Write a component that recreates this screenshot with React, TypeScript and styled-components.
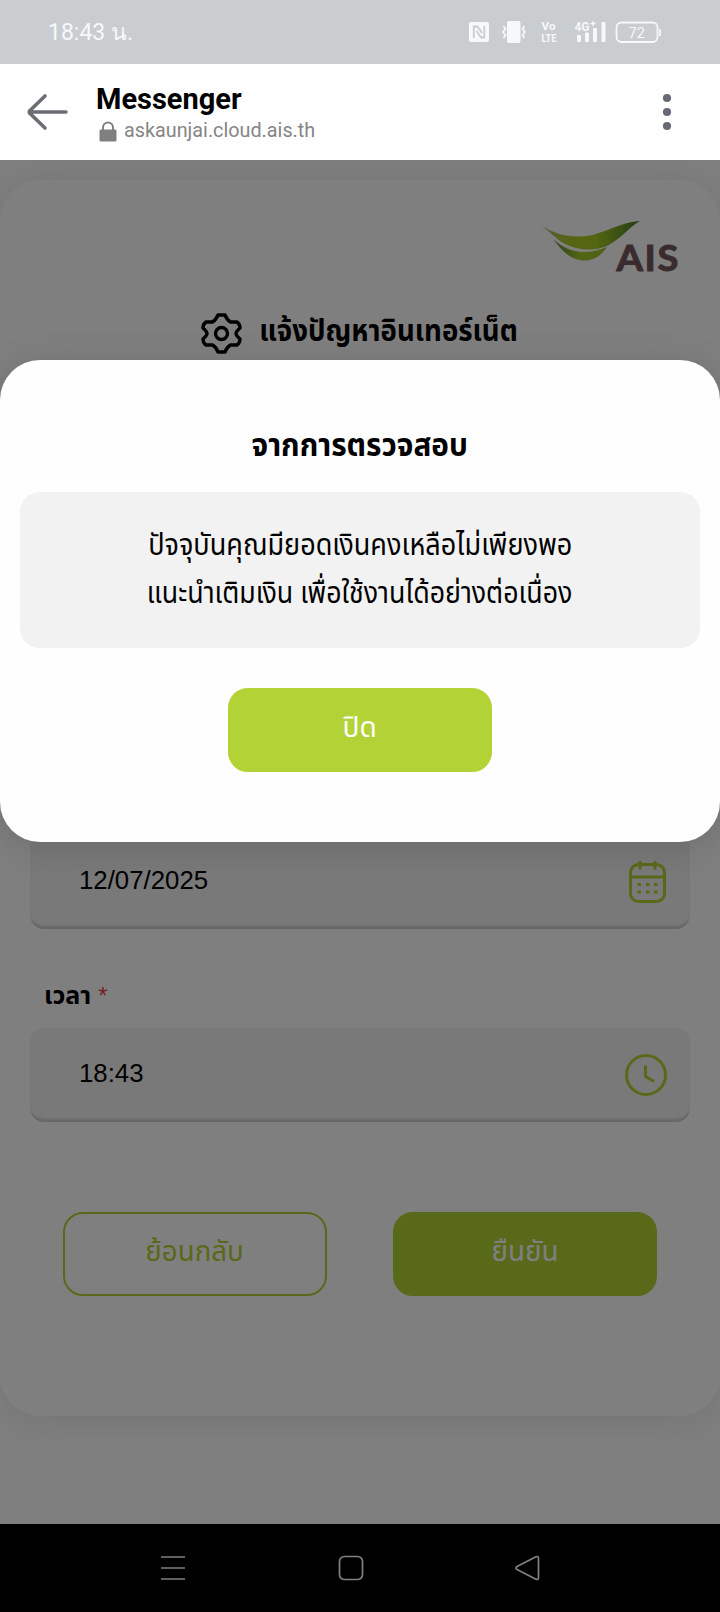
import React from 'react';
import styled, { createGlobalStyle } from 'styled-components';

const thai = '"Noto Sans Thai", "Liberation Sans", sans-serif';

const GlobalStyle = createGlobalStyle`
  * { box-sizing: border-box; }
  body { margin: 0; background: #000; font-family: ${thai}; }
`;

const Phone = styled.div`
  width: 720px;
  height: 1612px;
  display: flex;
  flex-direction: column;
  overflow: hidden;
`;

const StatusBar = styled.header`
  height: 64px;
  flex: none;
  background: #c9cdd0;
  color: #f6f8fa;
  display: flex;
  align-items: center;
  justify-content: space-between;
  padding: 0 59px 0 48px;
  font: 400 23px Roboto, sans-serif;
`;

const StatusIcons = styled.svg`
  display: block;
  width: 194px;
  height: 64px;
`;

const BrowserBar = styled.div`
  height: 96px;
  flex: none;
  background: #fff;
  display: flex;
  align-items: center;
  padding: 0 46px 0 27px;
`;

const PageInfo = styled.div`
  flex: 1;
  padding: 4px 0 0 27px;
`;

const PageTitle = styled.div`
  font: 700 29px/34px Roboto, sans-serif;
  color: #000;
`;

const PageUrl = styled.div`
  display: flex;
  align-items: center;
  gap: 7px;
  padding-left: 3px;
  font: 400 19.8px/30px Roboto, sans-serif;
  color: #858585;
`;

const Viewport = styled.main`
  position: relative;
  height: 1364px;
  flex: none;
  background: #fff;
  padding-top: 20px;
  overflow: hidden;
`;

const Card = styled.section`
  height: 1236px;
  border-radius: 40px;
  background: #fff;
  box-shadow: 0 4px 40px rgba(0, 0, 0, 0.1);
  display: flex;
  flex-direction: column;
  padding: 36px 30px 0;
`;

const LogoRow = styled.div`
  display: flex;
  justify-content: flex-end;
  padding-right: 8px;
  height: 64px;
`;

const Heading = styled.h1`
  display: flex;
  align-items: center;
  justify-content: center;
  gap: 6px;
  height: 60px;
  margin: 22px 0 0 9px;
  font: 700 30px ${thai};
  color: #000;
`;

const GearIcon = styled.svg`
  display: block;
  width: 41px;
  height: 41px;
  margin-top: 2px;
  fill: none;
  stroke: #000;
  stroke-width: 3.4;
  stroke-linejoin: round;
`;

const Form = styled.div`
  margin-top: 473px;
  display: flex;
  flex-direction: column;
`;

const Field = styled.div`
  height: 94px;
  border-radius: 14px;
  background: #f2f2f2;
  box-shadow: inset 0 -4px 2px -1px #cfcfcf;
  display: flex;
  align-items: center;
  justify-content: space-between;
  padding: 0 22px 4px 49px;
  font: 400 25.8px "Liberation Sans", sans-serif;
  color: #000;
`;

const FieldIcon = styled.svg`
  display: block;
  width: 42px;
  height: 44px;
  margin-top: 4px;
  margin-right: 1px;
  fill: none;
  stroke: #b2d235;
  stroke-width: 3;
`;

const Label = styled.label`
  height: 99px;
  padding: 45px 0 0 14px;
  display: flex;
  gap: 7px;
  font: 700 25px/44px ${thai};
  color: #000;
`;

const Required = styled.span`
  font: 400 24px/44px "Liberation Sans", sans-serif;
  color: #e8404a;
`;

const Actions = styled.div`
  display: flex;
  justify-content: space-between;
  padding: 0 33px;
  margin-top: 90px;
`;

const Button = styled.button<{ $outline?: boolean }>`
  width: 264px;
  height: 84px;
  border-radius: 20px;
  border: 2px solid #b2d235;
  background: ${(p) => (p.$outline ? 'transparent' : '#b2d235')};
  color: ${(p) => (p.$outline ? '#b2d235' : '#fff')};
  font: 400 29px ${thai};
  padding: 0 0 5px;
`;

const Overlay = styled.div`
  position: absolute;
  inset: 0;
  background: rgba(0, 0, 0, 0.5);
  padding-top: 200px;
`;

const Dialog = styled.div`
  height: 482px;
  border-radius: 40px;
  background: #fefefe;
  box-shadow: 0 6px 36px rgba(0, 0, 0, 0.13);
  display: flex;
  flex-direction: column;
  align-items: center;
  padding: 60px 20px 0;
`;

const DialogTitle = styled.h2`
  margin: 0;
  height: 72px;
  font: 700 31px/54px ${thai};
  color: #000;
`;

const Message = styled.div`
  width: 100%;
  height: 156px;
  margin-bottom: 40px;
  border-radius: 20px;
  background: #f2f2f2;
  display: flex;
  flex-direction: column;
  align-items: center;
  padding-top: 30px;
  font: 400 29.5px/48px ${thai};
  color: #000;
`;

const Fit = styled.span<{ $x?: number }>`
  display: inline-block;
  white-space: nowrap;
  transform: scaleX(${(p) => p.$x ?? 1});
`;

const NavBar = styled.nav`
  flex: 1;
  background: #000;
  display: flex;
  align-items: center;
  padding-left: 160px;
  gap: 151.5px;
`;

const NavIcon = styled.svg`
  display: block;
  width: 26px;
  height: 26px;
  fill: none;
  stroke: #808080;
  stroke-width: 1.7;
  stroke-linejoin: round;
`;

export default function App() {
  return (
    <Phone>
      <GlobalStyle />
      <StatusBar>
        <span>18:43 น.</span>
        <StatusIcons viewBox="468 0 194 64" fill="#f6f8fa">
          <rect x="470" y="22" width="20" height="20" rx="2" />
          <path d="M474.800 38V26.500L478.500 26.500L483 33M477.500 31L482 37.500H485.300V26" fill="none" stroke="#c9cdd0" strokeWidth="1.800" />
          <rect x="508" y="21" width="13.5" height="22" rx="2" />
          <path d="M504.500 26l2 3-2.500 3 2.500 3-2 3M525.500 26l-2 3 2.500 3-2.500 3 2 3" fill="none" stroke="#f6f8fa" strokeWidth="1.8" />
          <text x="542.500" y="30" fontSize="11" fontWeight="700" fontFamily="Roboto" textLength="14" lengthAdjust="spacingAndGlyphs">Vo</text>
          <text x="542.500" y="42" fontSize="11" fontWeight="700" fontFamily="Roboto" textLength="15" lengthAdjust="spacingAndGlyphs">LTE</text>
          <text x="575.500" y="31" fontSize="13" fontWeight="700" fontFamily="Roboto" textLength="15" lengthAdjust="spacingAndGlyphs">4G</text>
          <path d="M591.500 23.500h5M594 21v5" fill="none" stroke="#f6f8fa" strokeWidth="1.3" />
          <rect x="578" y="35" width="4" height="7" rx="1" />
          <rect x="586" y="32.500" width="4" height="9.500" rx="1" />
          <rect x="594" y="28" width="4" height="14" rx="1" />
          <rect x="602.500" y="22" width="4" height="20" rx="1" />
          <rect x="617.500" y="22.500" width="41" height="19.500" rx="5" fill="none" stroke="#f6f8fa" strokeWidth="1.8" />
          <path d="M661 29v7" stroke="#f6f8fa" strokeWidth="1.800" />
          <text x="629.500" y="37.500" fontSize="14.500" fontFamily="Roboto">72</text>
        </StatusIcons>
      </StatusBar>
      <BrowserBar>
        <svg width="42" height="40" viewBox="0 0 42 40" fill="none" stroke="#6b6f75" strokeWidth="3.600" strokeLinecap="round" strokeLinejoin="round">
          <path d="M39 20H3M18 4L3 18.500Q1.500 20 3 21.500L18 36" />
        </svg>
        <PageInfo>
          <PageTitle>Messenger</PageTitle>
          <PageUrl>
            <svg width="18" height="21" viewBox="0 0 18 21">
              <path d="M4 9V6.500a5 5 0 0 1 10 0V9" fill="none" stroke="#808080" strokeWidth="2" />
              <rect x="0.500" y="8.500" width="17" height="12" rx="1.500" fill="#808080" />
            </svg>
            askaunjai.cloud.ais.th
          </PageUrl>
        </PageInfo>
        <svg width="12" height="40" viewBox="0 0 12 40" fill="#666a76">
          <circle cx="5" cy="6" r="4.100" />
          <circle cx="5" cy="20" r="4.100" />
          <circle cx="5" cy="34" r="4.100" />
        </svg>
      </BrowserBar>
      <Viewport>
        <Card>
          <LogoRow>
            <svg width="142" height="64" viewBox="540 216 142 64">
              <defs>
                <linearGradient id="wing" x1="0" x2="1">
                  <stop offset="0" stopColor="#a0bc68" />
                  <stop offset="0.300" stopColor="#aecb2a" />
                  <stop offset="0.550" stopColor="#a8cc22" />
                  <stop offset="1" stopColor="#4a7a2a" />
                </linearGradient>
                <linearGradient id="leaf" x1="0" x2="1">
                  <stop offset="0" stopColor="#5f8a3a" />
                  <stop offset="0.500" stopColor="#a4cc2a" />
                  <stop offset="1" stopColor="#9cc02c" />
                </linearGradient>
              </defs>
              <path d="M541.500 225.500C554 234 570 238 587 236C607 232.500 621 222 640 221C630 226 622 238 607 246C594 251.500 577 250.500 564 243.500C555 238 550 232 541.500 225.500Z" fill="url(#wing)" />
              <path d="M553.500 239.500C566 250.500 583 257 607 247C602 255 594 260.500 585 260.500C571 260.500 562 251 553.500 239.500Z" fill="url(#leaf)" />
              <text x="616.500" y="270.500" fontFamily="Lato, sans-serif" fontWeight="700" fontSize="36" letterSpacing="1.500" textLength="63.500" lengthAdjust="spacingAndGlyphs" fill="#74585c" stroke="#74585c" strokeWidth="1" strokeLinejoin="round">AIS</text>
            </svg>
          </LogoRow>
          <Heading>
            <GearIcon viewBox="-20.500 -20.500 41 41">
              <path d="M-3.500 -18.500H3.500Q5.500 -13.500 9 -11.500L15.500 -11.500Q18.500 -9.500 18.500 -5.500Q14.500 -2 14.500 0Q14.500 2 18.500 5.500Q18.500 9.500 15.500 11.500L9 11.500Q5.500 13.500 3.500 18.500H-3.500Q-5.500 13.500 -9 11.500L-15.500 11.500Q-18.500 9.500 -18.500 5.500Q-14.500 2 -14.500 0Q-14.500 -2 -18.500 -5.500Q-18.500 -9.500 -15.500 -11.500L-9 -11.500Q-5.500 -13.500 -3.500 -18.500Z" />
              <circle r="6" />
            </GearIcon>
            <Fit $x={0.92}>แจ้งปัญหาอินเทอร์เน็ต</Fit>
          </Heading>
          <Form>
            <Field>
              12/07/2025
              <FieldIcon viewBox="0 0 42 44">
                <rect x="5.500" y="4.500" width="34" height="37" rx="8" />
                <path d="M5.500 17h34M15 1v8.500M30 1v8.500" />
                <path d="M12.500 24.500h3.500M21 24.500h3.500M29 24.500h3.500M12.500 32h3.500M21 32h3.500M29 32h3.500" />
              </FieldIcon>
            </Field>
            <Label>
              <Fit>เวลา</Fit>
              <Required>*</Required>
            </Label>
            <Field>
              18:43
              <FieldIcon viewBox="0 0 42 44">
                <circle cx="21" cy="22" r="19.500" />
                <path d="M20.500 12.500V23.500L29 28.500" />
              </FieldIcon>
            </Field>
            <Actions>
              <Button $outline><Fit $x={0.955}>ย้อนกลับ</Fit></Button>
              <Button><Fit $x={0.955}>ยืนยัน</Fit></Button>
            </Actions>
          </Form>
        </Card>
        <Overlay>
          <Dialog>
            <DialogTitle><Fit $x={0.96}>จากการตรวจสอบ</Fit></DialogTitle>
            <Message>
              <Fit $x={0.917}>ปัจจุบันคุณมียอดเงินคงเหลือไม่เพียงพอ</Fit>
              <Fit $x={0.907}>แนะนำเติมเงิน เพื่อใช้งานได้อย่างต่อเนื่อง</Fit>
            </Message>
            <Button><Fit $x={0.97}>ปิด</Fit></Button>
          </Dialog>
        </Overlay>
      </Viewport>
      <NavBar>
        <NavIcon viewBox="0 0 26 26"><path d="M1 2h24M1 13h24M1 24h24" /></NavIcon>
        <NavIcon viewBox="0 0 26 26"><rect x="1.500" y="1.500" width="23" height="23" rx="5" /></NavIcon>
        <NavIcon viewBox="0 0 26 26"><path d="M2 11.500L21 1.800Q23.500 1 23.500 3.500V22.500Q23.500 25 21 24.200L2 14.500Q0 13 2 11.500Z" /></NavIcon>
      </NavBar>
    </Phone>
  );
}
